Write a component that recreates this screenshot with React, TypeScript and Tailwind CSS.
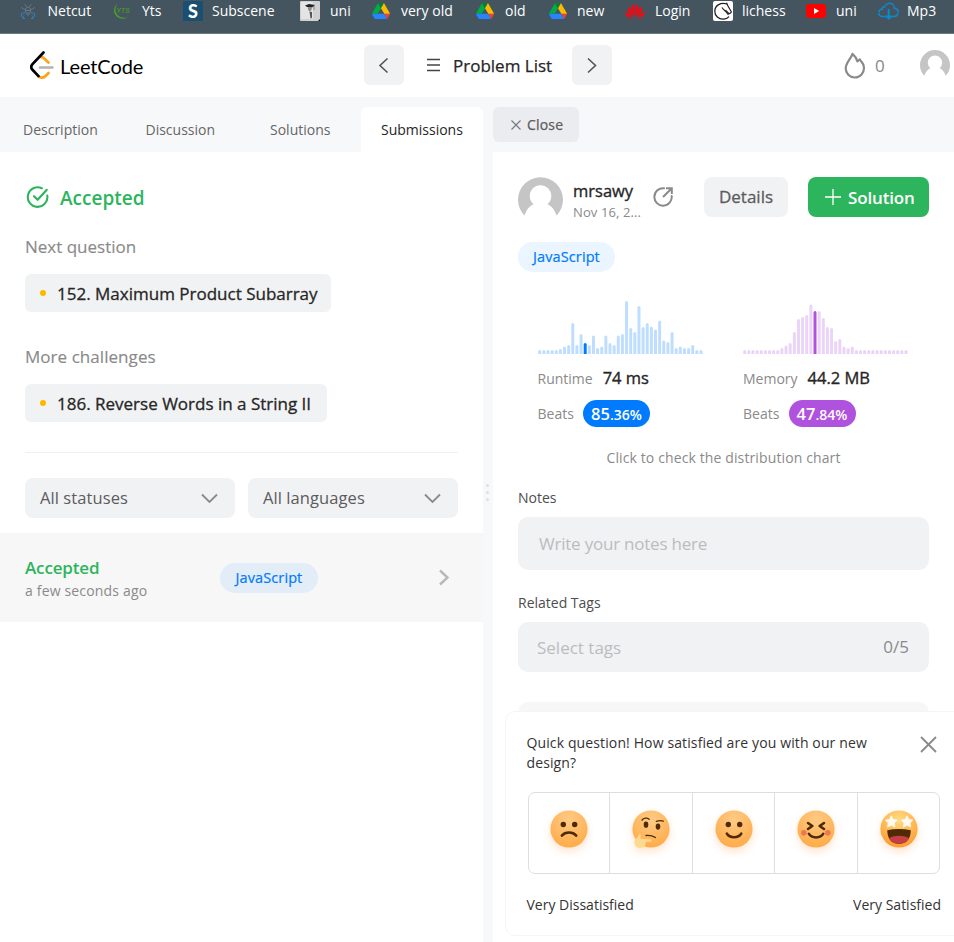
import React from "react";

const runtimeBars = [4, 4, 4, 4, 4, 5, 7.5, 9, 31, 9, 20, 11, 9, 18.5, 6, 7.5, 18.5, 11, 9, 18.5, 20, 53, 26, 22, 48, 27, 31, 27.5, 24.5, 33.5, 13.5, 12, 22, 6, 7.5, 6, 6, 9, 4, 4];
const memoryBars = [4, 4, 4, 4, 4, 4, 4, 4, 4, 6, 8.5, 11, 22, 35, 37, 39, 49.5, 43, 43, 36, 27, 26, 13, 15, 7.5, 6, 7.5, 4, 4, 4, 4, 4, 4, 4, 4, 4, 4, 4, 4, 4];

function BarChart({ bars, active, color, activeColor }: { bars: number[]; active: number; color: string; activeColor: string }) {
  return (
    <svg width="166" height="54" viewBox="0 0 166 54" className="block">
      {bars.map((h, i) => {
        const x = 0.2 + i * 4.136;
        const t = 54 - h;
        return (
          <path
            key={i}
            d={`M${x} 54V${t + 1.5}a1.5 1.5 0 0 1 3 0V54z`}
            fill={i === active ? activeColor : color}
          />
        );
      })}
    </svg>
  );
}

function DriveIcon() {
  return (
    <svg width="18" height="16" viewBox="0 0 87.3 78" className="block">
      <path fill="#0066da" d="m6.6 66.85 3.85 6.65c.8 1.4 1.95 2.5 3.3 3.3L27.5 53H0c0 1.55.4 3.1 1.2 4.5z" />
      <path fill="#2684fc" d="M59.8 53H0c0 1.6.4 3.100 1.200 4.500l9.250 16c.8 1.400 1.950 2.500 3.300 3.300 1.350.8 2.900 1.200 4.500 1.200h50.800c1.600 0 3.150-.45 4.500-1.200z" />
      <path fill="#00ac47" d="M43.65 25 29.9 1.2c-1.35.8-2.5 1.9-3.3 3.3L1.2 48.5A9 9 0 0 0 0 53h27.5z" />
      <path fill="#ea4335" d="M73.55 76.8c1.35-.8 2.5-1.9 3.3-3.3l1.6-2.75L86.1 57.5c.8-1.4 1.2-2.95 1.2-4.5H59.8l5.85 11.5z" />
      <path fill="#00832d" d="M43.65 25 57.4 1.2C56.05.4 54.5 0 52.9 0H34.4c-1.6 0-3.15.45-4.5 1.2z" />
      <path fill="#ffba00" d="m73.4 26.5-12.7-22c-.8-1.4-1.95-2.5-3.3-3.3L43.65 25 59.8 53h27.45c0-1.55-.4-3.1-1.2-4.5z" />
    </svg>
  );
}

function NetcutIcon() {
  return (
    <svg width="16" height="16" viewBox="0 0 16 16" fill="none" strokeWidth="1">
      <path d="M4.500 1l2.500 3M11.500 1L9 4M1 4.500l4 2M15 4.500l-4 2" stroke="#5f7482" />
      <path d="M5 9.500L1.500 10.500V14M11 9.500l3.500 1V14M4 12.500L2.500 15.500H5M12 12.500l1.500 3H11" stroke="#2f82b5" />
      <path d="M5.500 5.500l2.500-1.500 2.500 1.500v4L8 12.500l-2.500-3z" stroke="#5f7888" />
      <path d="M5.500 7.500h5M6.500 10h3" stroke="#6b7c88" />
    </svg>
  );
}

function YtsIcon() {
  return (
    <svg width="18" height="17" viewBox="0 0 18 17" fill="none">
      <path d="M4.500 .5C1 3.500 0 8.500 2.500 12c2.800 4.200 8.800 4.800 12.300 2.300-3.800 1.200-8.500.5-10.800-3C1.800 8 2.200 4 4.500.5z" fill="#46a32a" />
      <text x="3.600" y="9.500" fontSize="7.500" fontWeight="700" fontStyle="italic" fontFamily="Liberation Sans, sans-serif" fill="#43962a" textLength="13" lengthAdjust="spacingAndGlyphs">YTS</text>
    </svg>
  );
}

function SubsceneIcon() {
  return (
    <span className="flex h-5 w-5 items-center justify-center bg-[#1a4f72] font-['Lato',sans-serif] text-[18px] leading-none font-black text-white">S</span>
  );
}

function UniIcon() {
  return (
    <svg width="20" height="20" viewBox="0 0 20 20">
      <rect width="20" height="20" rx="1" fill="#d0d0d0" />
      <rect x="1" y="1" width="12" height="17" fill="#e4e4e4" />
      <path d="M5 4.500l4-1.500 6 1-3 2.500-5-.500z" fill="#222" />
      <path d="M8 6h4l-.5 3-2 1.500L8 8.500z" fill="#8a8a8a" />
      <path d="M9.500 10.500l2.500.5v6l-1.500.5-.5-3.500z" fill="#555" />
      <path d="M14 4.500v4.500" stroke="#666" strokeWidth=".7" />
      <path d="M18 20l2-2v2z" fill="#111" />
    </svg>
  );
}

function HuaweiIcon() {
  return (
    <svg width="20" height="15" viewBox="0 0 20 15" fill="#f00a12">
      <path d="M9.600 12C7 8 6 4.500 6.600 2.300 7.100.8 8.300.4 9 .4c.6 3 .8 7.500.6 11.600z" />
      <path d="M8.800 12.500C5.500 10.500 2.800 7.500 2.600 5.200c-.1-1.300.7-2 1.500-2.500 2 2.500 3.900 6.300 4.700 9.800z" />
      <path d="M8 13.300C5 13.500 2.200 12.800 1 11.200.3 10.100.4 8.800.8 7.800c2.500 1.200 5.200 3.200 7.200 5.500z" />
      <path d="M7.600 14.200c-1.700.8-4.300 1-5.600-.3z" />
      <g transform="matrix(-1 0 0 1 20 0)">
        <path d="M9.600 12C7 8 6 4.500 6.600 2.300 7.100.8 8.300.4 9 .4c.6 3 .8 7.500.6 11.600z" />
        <path d="M8.800 12.500C5.500 10.500 2.800 7.500 2.600 5.200c-.1-1.300.7-2 1.500-2.500 2 2.500 3.900 6.300 4.700 9.800z" />
        <path d="M8 13.300C5 13.500 2.200 12.800 1 11.200.3 10.100.4 8.800.8 7.800c2.500 1.200 5.200 3.200 7.200 5.500z" />
        <path d="M7.600 14.200c-1.700.8-4.300 1-5.600-.3z" />
      </g>
    </svg>
  );
}

function LichessIcon() {
  return (
    <svg width="20" height="20" viewBox="0 0 20 20">
      <rect width="20" height="20" rx="2" fill="#fff" />
      <path d="M14 3C8 .8 1.800 4.500 1.800 10.200c0 5 4 8 8.200 8 2.800 0 4.800-1 6-2.700" fill="none" stroke="#222" strokeWidth="1.300" />
      <path d="M13.500 1.800L14.700 4.500 18.300 10.800c-.5 1.600-1.600 2-2.500 1.600L12.500 9.200" fill="none" stroke="#222" strokeWidth="1.200" />
      <path d="M9 6.500c.8 1.500 2 2.300 3.300 3.500L15.500 14" fill="none" stroke="#222" strokeWidth="1.200" />
    </svg>
  );
}

function YoutubeIcon() {
  return (
    <svg width="20" height="14" viewBox="0 0 20 14">
      <rect width="20" height="14" rx="3" fill="#f00" />
      <path d="M8 4l5.200 3L8 10z" fill="#fff" />
    </svg>
  );
}

function CloudIcon() {
  return (
    <svg width="21" height="18" viewBox="0 0 21 18" fill="none" stroke="#0c8ad0" strokeWidth="1.600">
      <path d="M7.500 14.500H4.500a3.600 3.600 0 0 1-.5-7.200c0-1.700 1.300-2.800 2.900-2.600C7.800 2.400 9.300 1.200 11.500 1.200c3 0 4.800 2.200 4.900 5 2 .3 3.700 1.800 3.700 4 0 2.500-1.800 4.300-4 4.300h-2.500" strokeDasharray="9 .8" />
      <path d="M10.700 7v9.500M8 13.800l2.700 2.700 2.700-2.700" strokeWidth="2" />
    </svg>
  );
}

function Avatar({ size }: { size: number }) {
  return (
    <svg width={size} height={size} viewBox="0 0 45 45" className="block shrink-0">
      <path d="M6.500 38.500A22.500 22.500 0 1 1 38.500 38.500C36.500 32.500 33.500 29 29.500 27.200A10.800 10.800 0 1 0 15.500 27.200C11.500 29 8.500 32.500 6.500 38.500Z" fill="#c5c5c5" />
    </svg>
  );
}

function LeetLogo() {
  return (
    <svg width="24" height="28" viewBox="0 0 24 28" fill="none" strokeLinecap="round" strokeWidth="2.700" className="block">
      <path d="M11.500 6.200c1 0 1.700.400 2.400 1L18.500 11.500" stroke="#ffa116" />
      <path d="M18.500 22L15.500 25c-2.200 2.200-5 2.200-7 .2" stroke="#ffa116" />
      <path d="M10 16.500h12.400" stroke="#b3b3b3" strokeWidth="2.500" />
      <path d="M13.500 1.500L2.500 13.100c-1.600 1.800-1.600 4 0 5.700l6 6.300" stroke="#000" />
    </svg>
  );
}

type Mood = "sad" | "thinking" | "smile" | "laugh" | "star";

function Face({ mood }: { mood: Mood }) {
  const ink = "#4f2a05";
  return (
    <svg width="38" height="38" viewBox="0 0 38 38" className="mt-[-8px] block overflow-visible drop-shadow-[0_4px_4px_rgba(255,140,50,0.24)]">
      <defs>
        <radialGradient id={`face-${mood}`} cx=".5" cy=".25" r=".75">
          <stop offset="0" stopColor={mood === "star" ? "#ffdc85" : "#ffcb86"} />
          <stop offset="1" stopColor={mood === "star" ? "#ff9c30" : "#ffab48"} />
        </radialGradient>
      </defs>
      <circle cx="19" cy="19" r="18.600" fill={`url(#face-${mood})`} />
      {(mood === "sad" || mood === "smile") && (
        <g fill={ink}>
          <circle cx="13.300" cy="14.500" r="2.700" />
          <circle cx="24.700" cy="14.500" r="2.700" />
        </g>
      )}
      {mood === "sad" && <path d="M11.800 25.600c3.500-4 11-4 14.500 0" fill="none" stroke={ink} strokeWidth="2.500" strokeLinecap="round" />}
      {mood === "smile" && <path d="M11.800 23.500c3 5 11.500 5 14.500 0" fill="none" stroke={ink} strokeWidth="2.500" strokeLinecap="round" />}
      {mood === "thinking" && (
        <g>
          <ellipse cx="14" cy="14.700" rx="2.300" ry="3.100" fill={ink} />
          <ellipse cx="26" cy="16.600" rx="2.300" ry="3.100" fill={ink} />
          <path d="M10 10.200c1.500-2.400 5-2.800 7.200-.9M24.300 11.400c2.300-.8 4.800-.9 7-.2M14 25.500c3.500-.4 6.500.2 9.500 2" fill="none" stroke={ink} strokeWidth="1.300" strokeLinecap="round" />
          <path d="M7.200 24.500c1.200-.6 1.900 0 1.700 1.300l-.6 3 9.800.4c1.800.2 1.900 2.300.1 2.500l-5 .4c1.300 2.200-.3 5-3.200 5.600-3.600.6-7-1-7.600-4.300-.5-3.500 3-5 4.800-8.900z" fill="#ffd98f" />
        </g>
      )}
      {mood === "laugh" && (
        <g>
          <circle cx="6.800" cy="22.800" r="2.800" fill="#ee7655" />
          <circle cx="30.800" cy="22.800" r="2.800" fill="#ee7655" />
          <path d="M11 13l4.300 3L11 19M27 13l-4.300 3L27 19" fill="none" stroke={ink} strokeWidth="2.600" strokeLinecap="round" strokeLinejoin="round" />
          <path d="M11.800 23.700c3 5 11.500 5 14.500 0" fill="none" stroke={ink} strokeWidth="2.500" strokeLinecap="round" />
        </g>
      )}
      {mood === "star" && (
        <g>
          <path d="M11.300 5.800l1.900 3.700 4 .6-2.900 2.900.7 4.100-3.700-1.900-3.700 1.900.7-4.100-2.900-2.900 4-.6zM27 5.800l1.900 3.700 4 .6-2.900 2.900.7 4.100-3.700-1.900-3.700 1.900.7-4.100-2.900-2.900 4-.6z" fill="#fffaf0" stroke="#fffaf0" strokeWidth=".8" strokeLinejoin="round" />
          <path d="M7.300 20.300c7.500-1.800 16-1.800 23.500 0 0 8-3.800 13.600-11.800 13.600S7.300 28.300 7.300 20.300z" fill={ink} />
          <path d="M9.200 28.200c5.300-3.200 14.300-3.200 19.700 0-1.800 3.700-5.100 5.700-9.900 5.700s-8-2-9.800-5.700z" fill="#c63f42" />
        </g>
      )}
    </svg>
  );
}

function Chevron({ dir, className }: { dir: "left" | "right" | "down"; className: string }) {
  const d = dir === "left" ? "M9.500 1.500L2 8.500L9.500 15.500" : dir === "right" ? "M2 1.500L9.500 8.500L2 15.500" : "M1 1.500L8.500 9L16 1.500";
  const down = dir === "down";
  return (
    <svg width={down ? 17 : 12} height={down ? 11 : 17} viewBox={down ? "0 0 17 11" : "0 0 12 17"} fill="none" stroke="currentColor" className={className}>
      <path d={d} />
    </svg>
  );
}

function Bookmark({ icon, label, w, box }: { icon: React.ReactNode; label: string; w: string; box: string }) {
  return (
    <div className={`flex h-full shrink-0 items-center ${w}`}>
      <span className={`flex shrink-0 justify-start ${box}`}>{icon}</span>
      <span className="pb-px text-[14px] text-white">{label}</span>
    </div>
  );
}

function BookmarksBar() {
  return (
    <div className="h-[34px] overflow-hidden border-b border-[#6d7981] bg-[#445560] pl-5">
      <div className="flex h-[22px] items-center">
        <Bookmark icon={<NetcutIcon />} label="Netcut" w="w-[93px]" box="w-[27.5px]" />
        <Bookmark icon={<YtsIcon />} label="Yts" w="w-[70px]" box="w-[29px]" />
        <Bookmark icon={<SubsceneIcon />} label="Subscene" w="w-[117px]" box="w-[29px]" />
        <Bookmark icon={<UniIcon />} label="uni" w="w-[72px]" box="w-[30px]" />
        <Bookmark icon={<DriveIcon />} label="very old" w="w-[104px]" box="w-[29px]" />
        <Bookmark icon={<DriveIcon />} label="old" w="w-[73px]" box="w-[29px]" />
        <Bookmark icon={<DriveIcon />} label="new" w="w-[76px]" box="w-[28px]" />
        <Bookmark icon={<HuaweiIcon />} label="Login" w="w-[88px]" box="w-[30px]" />
        <Bookmark icon={<LichessIcon />} label="lichess" w="w-[93px]" box="w-[29px]" />
        <Bookmark icon={<YoutubeIcon />} label="uni" w="w-[72px]" box="w-[30px]" />
        <Bookmark icon={<CloudIcon />} label="Mp3" w="w-[70px]" box="w-[29px]" />
      </div>
    </div>
  );
}

function Header() {
  return (
    <header className="flex h-[63px] items-center bg-white pb-px pl-[30px]">
      <LeetLogo />
      <span className="mt-px ml-[6px] w-[304px] font-['Lato',sans-serif] text-[20px] tracking-[-0.1px] text-black">LeetCode</span>
      <button className="flex h-10 w-10 items-center justify-center rounded-md bg-[#f1f2f4] text-[#555]">
        <Chevron dir="left" className="stroke-[1.6]" />
      </button>
      <svg width="13" height="14" viewBox="0 0 13 14" stroke="#444" strokeWidth="1.500" className="ml-[23px]">
        <path d="M0 1.500h13M0 7h13M0 12.500h13" />
      </svg>
      <span className="mt-px ml-[13px] w-[119px] text-[17px] whitespace-nowrap text-[#262626] [-webkit-text-stroke:0.25px]">Problem List</span>
      <button className="flex h-10 w-10 items-center justify-center rounded-md bg-[#f1f2f4] text-[#555]">
        <Chevron dir="right" className="stroke-[1.6]" />
      </button>
      <svg width="22" height="27" viewBox="0 0 22 27" fill="none" stroke="#8a8a8a" strokeWidth="2.200" strokeLinejoin="round" className="ml-[232px]">
        <path d="M8.500 1.800c2 1.600 3.900 4.200 4.900 7.700l2.400-2.200c.3 1 .7 1.600 1.600 2.300 1.700 1.700 2.600 4 2.600 6.400 0 5.300-3.900 9.500-9.200 9.500S1.700 21.500 1.700 16.300c0-5.500 5.200-9.500 6.800-14.500z" />
      </svg>
      <span className="mt-px ml-[9px] w-[45px] text-[17px] text-[#8a8a8a]">0</span>
      <Avatar size={30} />
    </header>
  );
}

function LanguagePill({ className }: { className: string }) {
  return (
    <span className={`flex h-[30px] items-center justify-center rounded-full text-[14.5px] text-[#007aff] [-webkit-text-stroke:0.2px] ${className}`}>
      <span className="tracking-[0.1px]">JavaScript</span>
    </span>
  );
}

function QuestionChip({ label, w }: { label: string; w: string }) {
  return (
    <div className={`flex h-[38px] items-center rounded-md bg-[#f1f2f4] pl-[15px] ${w}`}>
      <span className="h-[6px] w-[6px] rounded-full bg-[#ffb800]" />
      <span className="mt-px ml-[11px] text-[17px] whitespace-nowrap text-[#262626] [-webkit-text-stroke:0.3px]">{label}</span>
    </div>
  );
}

function Select({ label }: { label: string }) {
  return (
    <div className="flex h-10 w-[210px] items-center justify-between rounded-lg bg-[#f1f2f4] pr-[17px] pl-[15px] text-[#8a8a8a]">
      <span className="mt-px text-[16.5px] tracking-[0.08px] text-[#5c5c5c]">{label}</span>
      <Chevron dir="down" className="stroke-[1.8]" />
    </div>
  );
}

function LeftPanel() {
  return (
    <section className="flex w-[483px] shrink-0 flex-col bg-white">
      <nav className="flex h-[55px] items-end bg-[#f7f8fa] text-[14px] text-[#666]">
        <span className="flex h-[45px] w-[123px] items-center pl-[23px]">Description</span>
        <span className="flex h-[45px] w-[124px] items-center pl-[22.5px]">Discussion</span>
        <span className="flex h-[45px] w-[114px] items-center pl-[23px]">Solutions</span>
        <span className="flex h-[45px] w-[122px] items-center rounded-t-md bg-white pl-[20px] text-[#262626]">Submissions</span>
      </nav>
      <div className="px-[25px]">
        <div className="flex h-[91px] items-center text-[#2db55d]">
          <svg width="24" height="24" viewBox="0 0 24 24" fill="none" stroke="currentColor" strokeWidth="2.100" strokeLinecap="round" strokeLinejoin="round" className="mt-[-2px]">
            <path d="M16.800 3.200A9.800 9.800 0 1 0 22.300 10.600" />
            <path d="M9 11.200l3.600 3.600L21.800 4.800" />
          </svg>
          <span className="mt-[2px] ml-[11px] text-[19px] font-semibold">Accepted</span>
        </div>
        <div className="flex h-[31px] items-start text-[17px] leading-[8px] text-[#8a8a8a] [-webkit-text-stroke:0.15px]">Next question</div>
        <QuestionChip label="152. Maximum Product Subarray" w="w-[306px]" />
        <div className="flex h-[72px] items-center pt-[18px] text-[17px] tracking-[0.05px] text-[#8a8a8a] [-webkit-text-stroke:0.15px]">More challenges</div>
        <QuestionChip label="186. Reverse Words in a String II" w="w-[302px]" />
        <div className="mt-[30px] h-px bg-[#f0f0f0]" />
        <div className="mt-[25px] flex gap-[13px]">
          <Select label="All statuses" />
          <Select label="All languages" />
        </div>
      </div>
      <div className="mt-[15px] flex h-[89px] items-center bg-[#f7f7f7] pl-[25px]">
        <div className="w-[195px] pt-[2px]">
          <div className="text-[17px] leading-[24px] font-semibold tracking-[-0.15px] text-[#2db55d]">Accepted</div>
          <div className="text-[14px] leading-[22px] tracking-[0.17px] text-[#8a8a8a]">a few seconds ago</div>
        </div>
        <LanguagePill className="w-[98px] bg-[#e3edf8]" />
        <Chevron dir="right" className="ml-[120px] stroke-[2.4] text-[#b8b8b8]" />
      </div>
    </section>
  );
}

function Stat({ label, value, whole, fraction, pill, chart }: { label: string; value: string; whole: string; fraction: string; pill: string; chart: React.ReactNode }) {
  return (
    <div className="w-[205.5px]">
      {chart}
      <div className="mt-[12px] flex h-[24px] items-center whitespace-nowrap">
        <span className="text-[14px] text-[#8a8a8a]">{label}</span>
        <span className="ml-[10px] text-[16.5px] text-[#262626] [-webkit-text-stroke:0.35px]">{value}</span>
      </div>
      <div className="mt-[10px] flex h-[27px] items-center">
        <span className="w-[45.5px] text-[14px] text-[#8a8a8a]">Beats</span>
        <span className={`flex h-[27px] w-[67px] items-baseline justify-center rounded-full leading-[27px] font-semibold text-white ${pill}`}>
          <span className="text-[16.5px]">{whole}</span>
          <span className="text-[14px]">{fraction}</span>
        </span>
      </div>
    </div>
  );
}

function RightPanel() {
  return (
    <section className="flex min-w-0 flex-1 flex-col">
      <div className="h-[55px] pt-[10px]">
        <button className="flex h-[35px] w-[86px] items-center rounded-md bg-[#ebecef] pl-[18px] text-[14px] text-[#5c5c5c] [-webkit-text-stroke:0.25px]">
          <svg width="10" height="10" viewBox="0 0 10 10" stroke="#777" strokeWidth="1.100">
            <path d="M.5.5l9 9M9.500.5l-9 9" />
          </svg>
          <span className="ml-[6px] tracking-[0.2px]">Close</span>
        </button>
      </div>
      <div className="flex-1 bg-white pt-[25px] pl-[25px]">
        <div className="flex h-[45px]">
          <Avatar size={45} />
          <div className="ml-[10px] w-[80px] whitespace-nowrap">
            <div className="pt-[3px] text-[16.5px] leading-[22px] text-[#262626] [-webkit-text-stroke:0.35px]">mrsawy</div>
            <div className="text-[13px] leading-[20px] tracking-[0.1px] text-[#8a8a8a]">Nov 16, 2...</div>
          </div>
          <svg width="20" height="20" viewBox="0 0 20 20" fill="none" stroke="#8a8a8a" strokeWidth="2" className="mt-[10px]">
            <path d="M11 1.300A8.700 8.700 0 1 0 18.700 9" strokeLinecap="round" />
            <path d="M10 10l8-8M13 1.200h5.800V7" />
          </svg>
          <button className="ml-[31px] flex h-10 w-[84px] items-center justify-center rounded-lg bg-[#f1f2f4] text-[17px] text-[#5c5c5c] [-webkit-text-stroke:0.3px]">Details</button>
          <button className="ml-5 flex h-10 w-[121px] items-center rounded-lg bg-[#2db55d] pl-[17px] text-[17px] font-semibold text-white">
            <svg width="16" height="16" viewBox="0 0 16 16" stroke="white" strokeWidth="1.300">
              <path d="M8 0v16M0 8h16" />
            </svg>
            <span className="mt-px ml-[7px] tracking-[-0.15px]">Solution</span>
          </button>
        </div>
        <LanguagePill className="mt-[20px] w-[97px] bg-[#eaf5ff]" />
        <div className="mt-[28px] flex pl-[19.5px]">
          <Stat label="Runtime" value="74 ms" whole="85" fraction=".36%" pill="bg-[#007aff]" chart={<BarChart bars={runtimeBars} active={11} color="#bfdeff" activeColor="#007aff" />} />
          <Stat label="Memory" value="44.2 MB" whole="47" fraction=".84%" pill="bg-[#af52de]" chart={<BarChart bars={memoryBars} active={17} color="#ebd4f7" activeColor="#af52de" />} />
        </div>
        <div className="mt-[18px] flex h-[24px] w-[411px] items-center justify-center text-[14px] tracking-[0.12px] text-[#8a8a8a]">Click to check the distribution chart</div>
        <div className="mt-[16px] flex h-[25px] items-center text-[14px] text-[#4d4d4d]">Notes</div>
        <div className="mt-[7px] flex h-[53px] w-[411px] items-center rounded-[10px] bg-[#f1f2f4] pl-[21px] text-[17px] tracking-[-0.22px] text-[#bcbcbe]">Write your notes here</div>
        <div className="mt-[20px] flex h-[25px] items-center text-[14px] text-[#4d4d4d]">Related Tags</div>
        <div className="mt-[7px] flex h-[50px] w-[411px] items-center justify-between rounded-[10px] bg-[#f1f2f4] pr-[20px] pl-[19px] text-[17px] text-[#bcbcbe]">
          <span className="mt-px">Select tags</span>
          <span className="text-[#8a8a8a]">0/5</span>
        </div>
        <div className="mt-[30px] h-[60px] w-[411px] rounded-[10px] bg-[#f7f7f7]" />
      </div>
    </section>
  );
}

const moods: Mood[] = ["sad", "thinking", "smile", "laugh", "star"];

function Survey() {
  return (
    <aside className="absolute top-[711px] left-[505px] h-[225px] w-[462px] rounded-[10px] border border-[#f5f5f5] bg-white text-[14px] text-[#333]">
      <div className="flex pt-[21px] pl-[20.5px]">
        <p className="w-[393.5px] leading-[20px] tracking-[0.12px]">
          Quick question! How satisfied are you with our new
          <br />
          design?
        </p>
        <svg width="17" height="17" viewBox="0 0 17 17" stroke="#8a8a8a" strokeWidth="1.800" className="mt-[3px]">
          <path d="M1 1l15 15M16 1L1 16" />
        </svg>
      </div>
      <div className="mt-[19px] ml-[22px] grid h-[82px] w-[412px] grid-cols-[81px_83px_82px_83px_81px] rounded-[7px] border border-[#dedede]">
        {moods.map((m) => (
          <div key={m} className="flex items-center justify-center border-r border-[#dedede] last:border-r-0">
            <Face mood={m} />
          </div>
        ))}
      </div>
      <div className="mt-[21px] ml-[20.5px] flex w-[414.5px] justify-between leading-[20px]">
        <span>Very Dissatisfied</span>
        <span>Very Satisfied</span>
      </div>
    </aside>
  );
}

export default function App() {
  return (
    <div className="relative flex h-[942px] w-[954px] flex-col overflow-hidden bg-[#f7f8fa] font-['Open_Sans','Noto_Sans',sans-serif]">
      <BookmarksBar />
      <Header />
      <main className="flex min-h-0 flex-1">
        <LeftPanel />
        <div className="flex w-[10px] shrink-0 flex-col items-center gap-[4px] pt-[387px] pr-[2px]">
          <span className="h-[3px] w-[3px] rounded-full bg-[#dfe0e2]" />
          <span className="h-[3px] w-[3px] rounded-full bg-[#dfe0e2]" />
          <span className="h-[3px] w-[3px] rounded-full bg-[#dfe0e2]" />
        </div>
        <RightPanel />
      </main>
      <Survey />
    </div>
  );
}
